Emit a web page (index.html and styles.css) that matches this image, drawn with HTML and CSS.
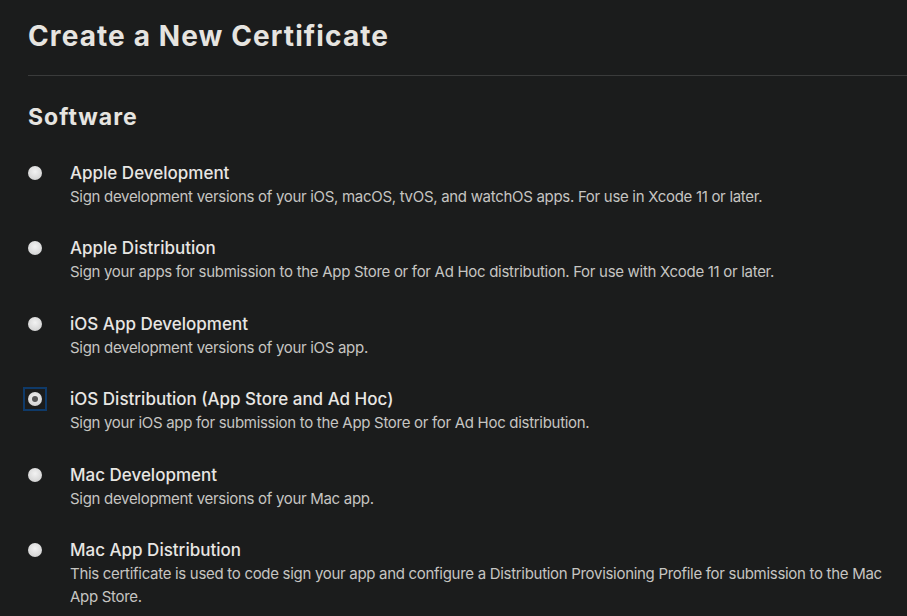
FILE: index.html
```html
<!DOCTYPE html>
<html>
<head>
<meta charset="utf-8">
<link rel="stylesheet" href="styles.css">
</head>
<body>
<main class="page">
  <h1 class="title">Create a New Certificate</h1>
  <hr class="rule">
  <h2 class="section">Software</h2>
  <ul class="options">
    <li class="option">
      <span class="radio"></span>
      <div class="text">
        <div class="name">Apple Development</div>
        <div class="desc">Sign development versions of your iOS, macOS, tvOS, and watchOS apps. For use in Xcode 11 or later.</div>
      </div>
    </li>
    <li class="option">
      <span class="radio"></span>
      <div class="text">
        <div class="name">Apple Distribution</div>
        <div class="desc">Sign your apps for submission to the App Store or for Ad Hoc distribution. For use with Xcode 11 or later.</div>
      </div>
    </li>
    <li class="option">
      <span class="radio"></span>
      <div class="text">
        <div class="name">iOS App Development</div>
        <div class="desc">Sign development versions of your iOS app.</div>
      </div>
    </li>
    <li class="option">
      <span class="radio checked"></span>
      <div class="text">
        <div class="name">iOS Distribution (App Store and Ad Hoc)</div>
        <div class="desc">Sign your iOS app for submission to the App Store or for Ad Hoc distribution.</div>
      </div>
    </li>
    <li class="option">
      <span class="radio"></span>
      <div class="text">
        <div class="name">Mac Development</div>
        <div class="desc">Sign development versions of your Mac app.</div>
      </div>
    </li>
    <li class="option">
      <span class="radio"></span>
      <div class="text">
        <div class="name">Mac App Distribution</div>
        <div class="desc">This certificate is used to code sign your app and configure a Distribution Provisioning Profile for submission to the Mac App Store.</div>
      </div>
    </li>
  </ul>
</main>
</body>
</html>
```
FILE: styles.css
```css
html, body {
  margin: 0;
  padding: 0;
  background: #1b1c1c;
  height: 100%;
  overflow: hidden;
}
.page {
  padding: 16px 10px 0 28px;
  font-family: Inter, "Noto Sans", sans-serif;
  color: #e4e3e0;
}
.title {
  margin: 0;
  font-size: 28px;
  font-weight: 700;
  letter-spacing: 1.1px;
  line-height: 40px;
  color: #e6e4e0;
}
.rule {
  margin: 19px -10px 0 0;
  border: 0;
  border-top: 1px solid #3a3b3b;
}
.section {
  margin: 26px 0 0;
  font-size: 23px;
  font-weight: 700;
  letter-spacing: 1px;
  line-height: 30px;
  color: #e6e4e0;
}
.options {
  list-style: none;
  margin: 29px 0 0;
  padding: 0;
  display: flex;
  flex-direction: column;
  gap: 28.4px;
}
.option {
  display: flex;
  align-items: flex-start;
}
.radio {
  flex: none;
  width: 14px;
  height: 14px;
  margin: 5px 28px 0 0;
  border-radius: 50%;
  background: radial-gradient(circle at 50% 40%, #f2f2f2 0%, #d6d6d6 70%, #b8b8b8 100%);
  position: relative;
}
.radio.checked::before {
  content: "";
  position: absolute;
  left: -5px;
  top: -5px;
  width: 24px;
  height: 24px;
  border: 2px solid #0f3a69;
  box-sizing: border-box;
}
.radio.checked::after {
  content: "";
  position: absolute;
  left: 4px;
  top: 4px;
  width: 6px;
  height: 6px;
  border-radius: 50%;
  background: #555;
}
.text {
  flex: 1;
}
.name {
  font-size: 17px;
  font-weight: 500;
  line-height: 24px;
  color: #e8e6e3;
}
.desc {
  font-size: 15px;
  font-weight: 400;
  letter-spacing: -0.3px;
  line-height: 23px;
  color: #c6c5c2;
}
```
